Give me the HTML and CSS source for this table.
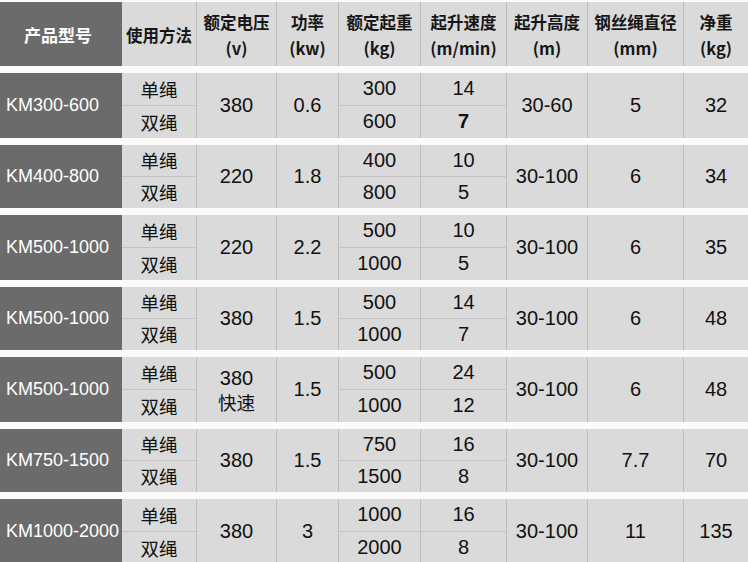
FILE: index.html
```html
<!DOCTYPE html>
<html lang="zh">
<head>
<meta charset="utf-8">
<title>产品参数</title>
<link rel="stylesheet" href="styles.css">
</head>
<body>
<div class="table">
  <div class="head">
    <div class="h model">产品型号</div>
    <div class="h first">使用方法</div>
    <div class="h">额定电压<br>(v)</div>
    <div class="h">功率<br>(kw)</div>
    <div class="h">额定起重<br>(kg)</div>
    <div class="h">起升速度<br>(m/min)</div>
    <div class="h">起升高度<br>(m)</div>
    <div class="h">钢丝绳直径<br>(mm)</div>
    <div class="h">净重<br>(kg)</div>
  </div>

  <div class="grp tall">
    <div class="c model">KM300-600</div>
    <div class="c use top">单绳</div>
    <div class="c span">380</div>
    <div class="c span">0.6</div>
    <div class="c top">300</div>
    <div class="c top">14</div>
    <div class="c span">30-60</div>
    <div class="c span">5</div>
    <div class="c span">32</div>
    <div class="c use">双绳</div>
    <div class="c">600</div>
    <div class="c bold">7</div>
  </div>

  <div class="grp">
    <div class="c model">KM400-800</div>
    <div class="c use top">单绳</div>
    <div class="c span">220</div>
    <div class="c span">1.8</div>
    <div class="c top">400</div>
    <div class="c top">10</div>
    <div class="c span">30-100</div>
    <div class="c span">6</div>
    <div class="c span">34</div>
    <div class="c use">双绳</div>
    <div class="c">800</div>
    <div class="c">5</div>
  </div>

  <div class="grp tall">
    <div class="c model">KM500-1000</div>
    <div class="c use top">单绳</div>
    <div class="c span">220</div>
    <div class="c span">2.2</div>
    <div class="c top">500</div>
    <div class="c top">10</div>
    <div class="c span">30-100</div>
    <div class="c span">6</div>
    <div class="c span">35</div>
    <div class="c use">双绳</div>
    <div class="c">1000</div>
    <div class="c">5</div>
  </div>

  <div class="grp">
    <div class="c model">KM500-1000</div>
    <div class="c use top">单绳</div>
    <div class="c span">380</div>
    <div class="c span">1.5</div>
    <div class="c top">500</div>
    <div class="c top">14</div>
    <div class="c span">30-100</div>
    <div class="c span">6</div>
    <div class="c span">48</div>
    <div class="c use">双绳</div>
    <div class="c">1000</div>
    <div class="c">7</div>
  </div>

  <div class="grp tall">
    <div class="c model">KM500-1000</div>
    <div class="c use top">单绳</div>
    <div class="c span two">380<br><span class="cn">快速</span></div>
    <div class="c span">1.5</div>
    <div class="c top">500</div>
    <div class="c top">24</div>
    <div class="c span">30-100</div>
    <div class="c span">6</div>
    <div class="c span">48</div>
    <div class="c use">双绳</div>
    <div class="c">1000</div>
    <div class="c">12</div>
  </div>

  <div class="grp">
    <div class="c model">KM750-1500</div>
    <div class="c use top">单绳</div>
    <div class="c span">380</div>
    <div class="c span">1.5</div>
    <div class="c top">750</div>
    <div class="c top">16</div>
    <div class="c span">30-100</div>
    <div class="c span">7.7</div>
    <div class="c span">70</div>
    <div class="c use">双绳</div>
    <div class="c">1500</div>
    <div class="c">8</div>
  </div>

  <div class="grp tall">
    <div class="c model">KM1000-2000</div>
    <div class="c use top">单绳</div>
    <div class="c span">380</div>
    <div class="c span">3</div>
    <div class="c top">1000</div>
    <div class="c top">16</div>
    <div class="c span">30-100</div>
    <div class="c span">11</div>
    <div class="c span">135</div>
    <div class="c use">双绳</div>
    <div class="c">2000</div>
    <div class="c">8</div>
  </div>
</div>
</body>
</html>
```

FILE: styles.css
```css
* { box-sizing: border-box; }

html, body {
  margin: 0;
  padding: 0;
  background: #fcfafa;
}

body {
  width: 748px;
  height: 562px;
  overflow: hidden;
  font-family: "Liberation Sans", "Noto Sans CJK SC", Arial, sans-serif;
  color: #111111;
}

.table {
  padding-top: 2px;
}

.head,
.grp {
  display: grid;
  grid-template-columns: 122px 74px 80px 62px 82px 86px 81px 96px 65px;
  background: #dadada;
}

.head {
  height: 64px;
}

.h {
  display: flex;
  align-items: center;
  justify-content: center;
  text-align: center;
  font-family: "Noto Sans CJK SC", "Liberation Sans", sans-serif;
  font-weight: 700;
  font-size: 16.5px;
  line-height: 26px;
  border-left: 1px solid #bdbdbd;
  padding-top: 2px;
  color: #161616;
}

.h.first {
  border-left: none;
}

.head .model {
  background: #6b6b6b;
  color: #ffffff;
  border-left: none;
  font-size: 17px;
  padding-right: 6px;
}

.grp {
  margin-top: 7px;
  height: 63px;
  grid-template-rows: 1fr 1fr;
}

.grp.tall {
  height: 65px;
}

.c {
  display: flex;
  align-items: center;
  justify-content: center;
  font-size: 20px;
  border-left: 1px solid #bdbdbd;
  white-space: nowrap;
}

.c.model {
  grid-row: span 2;
  background: #6b6b6b;
  color: #ffffff;
  justify-content: flex-start;
  padding-left: 6px;
  border-left: none;
  font-size: 18px;
}

.c.use {
  border-left: none;
  font-family: "Noto Sans CJK SC", "Liberation Sans", sans-serif;
  font-size: 18.5px;
}

.c.span {
  grid-row: span 2;
}

.c.top {
  border-bottom: 1px solid #c4c4c4;
}

.c.two {
  flex-direction: column;
  line-height: 24px;
}

.cn {
  font-family: "Noto Sans CJK SC", sans-serif;
  font-size: 18.5px;
  line-height: 24px;
}

.c.bold {
  font-weight: 700;
}
```
